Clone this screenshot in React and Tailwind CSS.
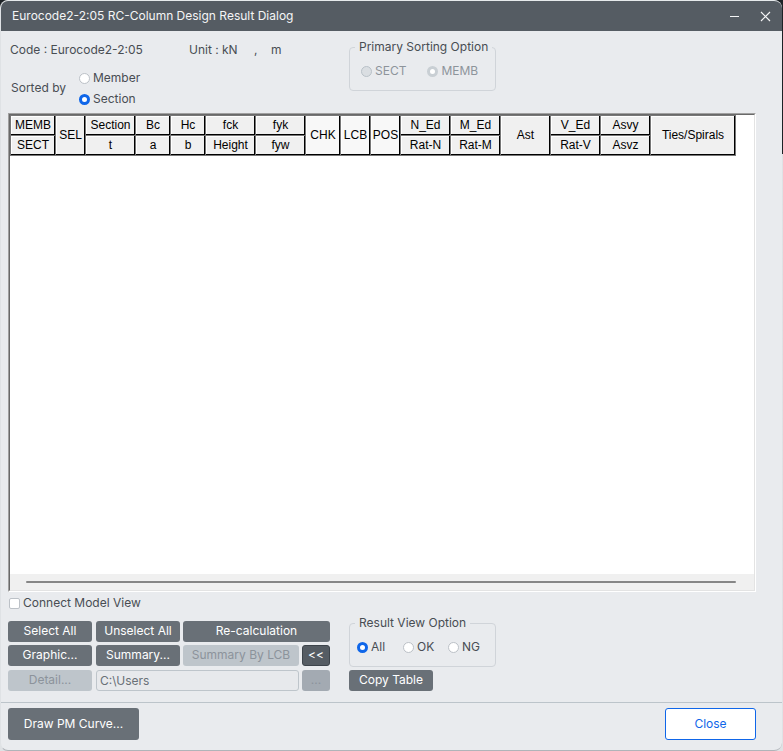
import clsx from 'clsx';
import { twMerge } from 'tailwind-merge';

const columns = [
    { top: 'MEMB', bottom: 'SECT', width: 'w-[45px]' },
    { top: 'SEL', width: 'w-[30px]' },
    { top: 'Section', bottom: 't', width: 'w-[50px]' },
    { top: 'Bc', bottom: 'a', width: 'w-[35px]' },
    { top: 'Hc', bottom: 'b', width: 'w-[35px]' },
    { top: 'fck', bottom: 'Height', width: 'w-[50px]' },
    { top: 'fyk', bottom: 'fyw', width: 'w-[50px]' },
    { top: 'CHK', width: 'w-[35px]', light: true },
    { top: 'LCB', width: 'w-[30px]', light: true },
    { top: 'POS', width: 'w-[30px]', light: true },
    { top: 'N_Ed', bottom: 'Rat-N', width: 'w-[50px]' },
    { top: 'M_Ed', bottom: 'Rat-M', width: 'w-[50px]' },
    { top: 'Ast', width: 'w-[50px]' },
    { top: 'V_Ed', bottom: 'Rat-V', width: 'w-[50px]' },
    { top: 'Asvy', bottom: 'Asvz', width: 'w-[50px]' },
    { top: 'Ties/Spirals', width: 'w-[85px]' },
];

function HeadCell({ light, children, ...props }) {
    return (
        <th
            scope="col"
            className={clsx(
                'h-5 p-0 pb-0.5 text-center align-middle font-normal whitespace-nowrap border-r border-b border-[#777] shadow-[inset_-1px_-1px_0_#000,inset_1px_1px_0_#fff]',
                light ? 'bg-[#f8f8f8]' : 'bg-[#f0f0f0]'
            )}
            {...props}
        >
            {children}
        </th>
    );
}

function Radio({ label, disabled, className, ...props }) {
    return (
        <label className={clsx('flex items-center gap-[3px]', disabled && 'text-[#8d949b]', className)}>
            <input
                type="radio"
                disabled={disabled}
                className="size-[11px] shrink-0 appearance-none rounded-full border border-[#bcc1c7] bg-white checked:border-[3px] checked:border-[#0f66e9] disabled:border-[#b9c1c8] disabled:bg-[#dadee2] disabled:checked:border-[#c9cfd4] disabled:checked:bg-white"
                {...props}
            />
            {label}
        </label>
    );
}

function Group({ title, className, children }) {
    return (
        <fieldset className="h-[52px] w-[147px] rounded border border-[#d0d4d9]">
            <legend className="ml-[5px] px-1">{title}</legend>
            <div className={clsx('flex pt-2', className)}>{children}</div>
        </fieldset>
    );
}

function Button({ className, ...props }) {
    return (
        <button
            type="button"
            className={twMerge(
                'h-[21px] rounded-[3px] bg-[#697077] pb-px text-center whitespace-nowrap text-white disabled:bg-[#bec5cb] disabled:text-[#8c939b]',
                className
            )}
            {...props}
        />
    );
}

export default function App() {
    return (
        <div className="flex min-h-screen flex-col bg-linear-to-b from-[#1d2226] from-[154px] to-[#dfe2e5] to-[154px] pr-px font-['Inter',sans-serif] text-xs leading-4 text-[#484d53]">
            <div className="flex flex-1 flex-col overflow-hidden rounded-lg border-t border-b border-l border-t-[#e6eaec] border-b-[#b0b4b9] border-l-[#dfe2e5] bg-[#e9ebee]">
                {/* Title bar */}
                <header className="flex h-[30px] items-center bg-[#555c63] pr-[11px] pl-[11px] text-[#f4f5f6]">
                    <h1 className="flex-1">Eurocode2-2:05 RC-Column Design Result Dialog</h1>
                    <button type="button" aria-label="Minimize" className="mr-5">
                        <svg width="11" height="11" viewBox="0 0 11 11" stroke="currentColor">
                            <path d="M1 5.5h9" />
                        </svg>
                    </button>
                    <button type="button" aria-label="Close window">
                        <svg width="11" height="11" viewBox="0 0 11 11" stroke="currentColor" strokeWidth="1.2">
                            <path d="M1 1l9 9M10 1l-9 9" />
                        </svg>
                    </button>
                </header>

                <main className="flex flex-1 flex-col pr-[26px] pl-[7px]">
                    <div className="flex h-[82px] items-start">
                        <div className="w-[341px] pt-[11px]">
                            <div className="flex pl-0.5">
                                <span className="w-[179px]">Code : Eurocode2-2:05</span>
                                <span className="w-[33px]">Unit :</span>
                                <span className="w-[32px]">kN</span>
                                <span className="w-[17px]">,</span>
                                <span>m</span>
                            </div>
                            <div className="flex items-center pt-3" role="radiogroup" aria-labelledby="sorted-by">
                                <span id="sorted-by" className="w-[71px] pb-px pl-[3px]">Sorted by</span>
                                <div className="flex flex-col gap-[5px]">
                                    <Radio name="sorted" label="Member" />
                                    <Radio name="sorted" label="Section" defaultChecked />
                                </div>
                            </div>
                        </div>
                        <div className="pt-2">
                            <Group title="Primary Sorting Option" className="gap-[21px] pl-[11px]">
                                <Radio name="primary" label="SECT" disabled />
                                <Radio name="primary" label="MEMB" disabled defaultChecked />
                            </Group>
                        </div>
                    </div>

                    {/* Result list */}
                    <div className="flex flex-1 flex-col border border-t-[#a0a0a0] border-r-white border-b-white border-l-[#a0a0a0]">
                        <div className="flex flex-1 flex-col border border-t-[#696969] border-r-[#e3e3e3] border-b-[#e3e3e3] border-l-[#696969] bg-white">
                            <div className="flex-1">
                                <table className="w-[726px] table-fixed border-separate border-spacing-0 border-t border-l border-[#777] font-['Liberation_Sans',Arial,sans-serif] text-xs leading-4 text-black">
                                    <colgroup>
                                        {columns.map((c) => (
                                            <col key={c.top} className={c.width} />
                                        ))}
                                    </colgroup>
                                    <thead>
                                        <tr>
                                            {columns.map((c) => (
                                                <HeadCell key={c.top} light={c.light} rowSpan={c.bottom ? 1 : 2}>
                                                    {c.top}
                                                </HeadCell>
                                            ))}
                                        </tr>
                                        <tr>
                                            {columns.filter((c) => c.bottom).map((c) => (
                                                <HeadCell key={c.bottom}>{c.bottom}</HeadCell>
                                            ))}
                                        </tr>
                                    </thead>
                                </table>
                            </div>
                            <div className="flex h-4 items-center bg-[#f0f0f0] pr-[18px] pl-4">
                                <div className="h-0.5 flex-1 rounded-full bg-[#868686]" />
                            </div>
                        </div>
                    </div>

                    <div className="flex h-[110px]">
                        <div className="w-[341px]">
                            <label className="flex items-center gap-[3px] pt-[3px] pl-px">
                                <input
                                    type="checkbox"
                                    className="size-[11px] appearance-none rounded-xs border border-[#bcc1c7] bg-white checked:bg-[#0f66e9]"
                                />
                                Connect Model View
                            </label>
                            <div className="mt-[10px] grid grid-cols-[85px_84px_116px_28px] grid-rows-[21px_22px_21px] gap-[3px]">
                                <Button className="w-[84px]">Select All</Button>
                                <Button>Unselect All</Button>
                                <Button className="col-span-2">Re-calculation</Button>
                                <Button className="w-[84px]">Graphic...</Button>
                                <Button>Summary...</Button>
                                <Button disabled>Summary By LCB</Button>
                                <Button className="border border-[#3d444b] bg-[#555c63]">&lt;&lt;</Button>
                                <Button className="w-[84px]" disabled>Detail...</Button>
                                <input
                                    type="text"
                                    aria-label="Output path"
                                    defaultValue="C:\Users"
                                    disabled
                                    className="col-span-2 h-[21px] min-w-0 rounded-[3px] border border-[#bec5cb] bg-[#e7e9ec] px-[3px] pb-px text-[#697077]"
                                />
                                <Button className="disabled:bg-[#a3aab2]" disabled>...</Button>
                            </div>
                        </div>
                        <div className="flex flex-col items-start gap-[3px] pt-[23px]">
                            <Group title="Result View Option" className="pl-[7px]">
                                <Radio name="view" label="All" className="w-[46px]" defaultChecked />
                                <Radio name="view" label="OK" className="w-[45px]" />
                                <Radio name="view" label="NG" />
                            </Group>
                            <Button className="w-[84px]">Copy Table</Button>
                        </div>
                    </div>
                </main>

                <footer className="flex h-12 items-start justify-between border-t border-[#bcc4ca] pt-[5px] pr-[26px] pl-[7px]">
                    <Button className="h-8 w-[131px]">Draw PM Curve...</Button>
                    <button
                        type="button"
                        className="h-8 w-[91px] rounded-[3px] border border-[#0f66e9] bg-white text-[#0f66e9]"
                    >
                        Close
                    </button>
                </footer>
            </div>
        </div>
    );
}
